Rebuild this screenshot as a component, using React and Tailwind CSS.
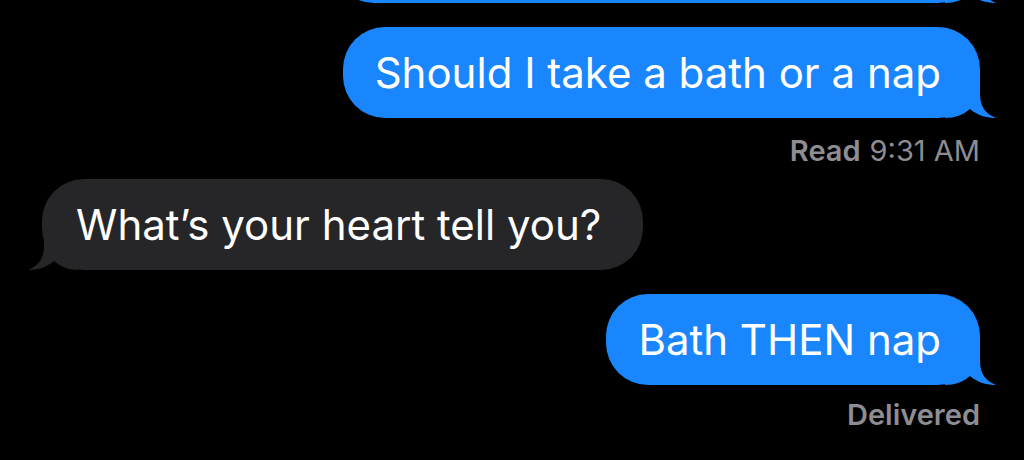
import React from 'react';

const BLUE = '#1a86fd';
const GRAY = '#262629';

function TailRight() {
  return (
    <svg
      aria-hidden="true"
      width="52"
      height="42"
      viewBox="0 0 52 42"
      className="pointer-events-none absolute bottom-0 right-[-17px]"
    >
      <path
        d="M35 0 L35 18 C35 31 41 38 51 42 C43 42 33 40 25 33 C18 39 10 42 0 42 L0 0 Z"
        fill={BLUE}
      />
    </svg>
  );
}

function TailLeft() {
  return (
    <svg
      aria-hidden="true"
      width="52"
      height="42"
      viewBox="0 0 52 42"
      className="pointer-events-none absolute bottom-0 left-[-15px]"
    >
      <path
        d="M17 0 L17 18 C17 31 11 38 1 42 C9 42 19 40 27 33 C34 39 42 42 52 42 L52 0 Z"
        fill={GRAY}
      />
    </svg>
  );
}

function SentBubble({ children }) {
  return (
    <div className="relative flex h-[91px] items-center rounded-[42px] bg-[#1a86fd] pl-[32px] pr-[39px]">
      <span className="whitespace-nowrap text-[42px] leading-none text-white">{children}</span>
      <TailRight />
    </div>
  );
}

function ReceivedBubble({ children }) {
  return (
    <div className="relative flex h-[91px] items-center rounded-[42px] bg-[#262629] pl-[34px] pr-[42px]">
      <span className="whitespace-nowrap text-[42px] leading-none text-white">{children}</span>
      <TailLeft />
    </div>
  );
}

export default function App() {
  return (
    <div
      className="h-[460px] w-[1024px] overflow-hidden bg-black"
      style={{ fontFamily: 'Inter, "Noto Sans", sans-serif' }}
    >
      <div className="flex flex-col">
        {/* previous message, mostly scrolled off the top */}
        <div className="mt-[-88px] flex justify-end pr-[44px]">
          <div className="relative h-[91px] w-[648px] rounded-[42px] bg-[#1a86fd]">
            <TailRight />
          </div>
        </div>

        <div className="mt-[24px] flex justify-end pr-[44px]">
          <SentBubble>Should I take a bath or a nap</SentBubble>
        </div>
        <div className="mt-[17px] flex justify-end pr-[44px] text-[29px] leading-[32px] text-[#8d8d92]">
          <span className="font-semibold">Read</span>
          <span className="ml-[9px]">9:31 AM</span>
        </div>

        <div className="mt-[12px] flex justify-start pl-[42px]">
          <ReceivedBubble>What’s your heart tell you?</ReceivedBubble>
        </div>

        <div className="mt-[24px] flex justify-end pr-[44px]">
          <SentBubble>Bath THEN nap</SentBubble>
        </div>
        <div className="mt-[14px] flex justify-end pr-[44px] text-[29px] font-semibold leading-[32px] text-[#8d8d92]">
          Delivered
        </div>
      </div>
    </div>
  );
}
